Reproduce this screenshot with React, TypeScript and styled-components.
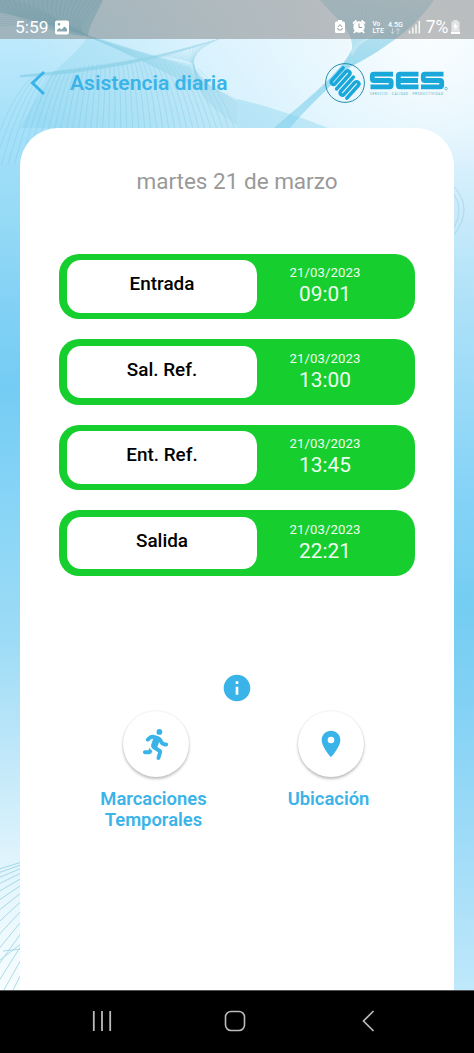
import React from "react";
import styled, { createGlobalStyle } from "styled-components";
import { FaPersonRunning } from "react-icons/fa6";
import { MdInfo, MdLocationOn } from "react-icons/md";

const Global = createGlobalStyle`
  * { box-sizing: border-box; }
  body { margin: 0; font-family: Roboto, sans-serif; }
`;

const blue = "#3ab4e8";

const Screen = styled.main`
  position: relative;
  width: 474px;
  height: 1053px;
  overflow: hidden;
  display: flex;
  flex-direction: column;
  isolation: isolate;
  background: #fff;
`;
const Backdrop = styled.svg`
  position: absolute;
  inset: 0;
  z-index: -1;
`;
const StatusBar = styled.div`
  height: 38.5px;
  flex: none;
  display: flex;
  align-items: center;
  padding: 16px 14px 0 15px;
  background: rgba(128, 128, 128, 0.5);
  color: #fff;
`;
const Clock = styled.span`
  font-size: 17.4px;
  line-height: 22px;
  width: 40px;
`;
const StatusIcons = styled.svg`
  display: block;
  margin-left: auto;
`;
const Battery = styled.span`
  font-size: 17.6px;
  line-height: 22px;
  letter-spacing: -0.3px;
  margin: 0 3px 0 5px;
`;
const Header = styled.header`
  height: 89.5px;
  flex: none;
  display: flex;
  align-items: center;
  padding: 0 26px 0 30px;
`;
const Title = styled.h1`
  margin: 0 auto 0 24px;
  font-size: 21.1px;
  font-weight: 600;
  line-height: 24px;
  color: ${blue};
`;
const Card = styled.section`
  flex: 1;
  margin: 0 20px;
  padding: 40px 39px 0;
  background: #fff;
  border-radius: 38px 38px 0 0;
  display: flex;
  flex-direction: column;
  align-items: center;
`;
const Day = styled.h2`
  margin: 0;
  font-size: 22.5px;
  line-height: 27px;
  font-weight: 400;
  color: #999;
`;
const Rows = styled.div`
  align-self: stretch;
  margin-top: 58.5px;
  display: grid;
  gap: 19.8px;
`;
const Row = styled.div`
  height: 65.8px;
  border-radius: 20px;
  background: #16cf2e;
  display: flex;
  padding: 6.5px 8px;
`;
const RowLabel = styled.div`
  width: 190px;
  height: 52.5px;
  border-radius: 14px;
  background: #fff;
  color: #000;
  text-align: center;
  font-size: 18.9px;
  font-weight: 500;
  line-height: 48px;
`;
const Stamp = styled.div`
  width: 136px;
  padding-top: 5px;
  display: flex;
  flex-direction: column;
  align-items: center;
  color: #effdf0;
`;
const StampDate = styled.span`
  font-size: 13.2px;
  line-height: 16px;
  letter-spacing: 0.1px;
`;
const StampTime = styled.span`
  font-size: 20.8px;
  line-height: 26px;
`;
const InfoIcon = styled(MdInfo)`
  display: block;
  margin-top: 96px;
  width: 32px;
  height: 32px;
  color: ${blue};
`;
const Actions = styled.div`
  align-self: stretch;
  display: flex;
  gap: 35px;
  padding: 7px 0 0 27px;
`;
const Action = styled.div`
  width: 140px;
  display: flex;
  flex-direction: column;
  align-items: center;
  text-align: center;
  font-size: 18.4px;
  line-height: 21px;
  font-weight: 600;
  color: ${blue};
`;
const ActionLabel = styled.span`
  margin-left: -5px;
`;
const RoundButton = styled.button`
  width: 66px;
  height: 66px;
  margin-bottom: 10.5px;
  padding: 0;
  border: 0;
  border-radius: 50%;
  background: #fff;
  color: ${blue};
  display: flex;
  align-items: center;
  justify-content: center;
  box-shadow: 0 2px 3px rgba(0, 0, 0, 0.25), 0 0 2px rgba(0, 0, 0, 0.1);
`;
const NavBar = styled.nav`
  height: 63.5px;
  flex: none;
  background: #000;
  border-top: 1px solid #555;
  display: flex;
  align-items: center;
  justify-content: space-between;
  padding: 0 94.5px 1px 89.5px;
`;

const range = (n: number) => Array.from({ length: n }, (_, i) => i);

const Waves = () => (
  <Backdrop width="474" height="1053" viewBox="0 0 474 1053">
    <defs>
      <linearGradient id="sky" x1="0" y1="0" x2="0" y2="990" gradientUnits="userSpaceOnUse">
        <stop offset="0" stopColor="#c9edfc" />
        <stop offset="0.12" stopColor="#a8e1f9" />
        <stop offset="0.22" stopColor="#96daf6" />
        <stop offset="0.3" stopColor="#84d2f5" />
        <stop offset="0.39" stopColor="#74ccf4" />
        <stop offset="0.5" stopColor="#86d4f6" />
        <stop offset="0.65" stopColor="#9edcf6" />
        <stop offset="0.76" stopColor="#bfe7f9" />
        <stop offset="0.87" stopColor="#e0f4fc" />
        <stop offset="1" stopColor="#f8fdfe" />
      </linearGradient>
      <linearGradient id="edge" x1="0" y1="120" x2="0" y2="990" gradientUnits="userSpaceOnUse">
        <stop offset="0" stopColor="#e8f5fd" stopOpacity="0" />
        <stop offset="0.06" stopColor="#d6effc" />
        <stop offset="0.2" stopColor="#b0e2f8" />
        <stop offset="0.43" stopColor="#85d3f7" />
        <stop offset="0.56" stopColor="#74cdf2" />
        <stop offset="0.68" stopColor="#84d2f5" />
        <stop offset="0.85" stopColor="#a3ddf8" />
        <stop offset="1" stopColor="#bfe8fb" />
      </linearGradient>
      <radialGradient id="glow" cx="430" cy="40" r="400" gradientUnits="userSpaceOnUse">
        <stop offset="0" stopColor="#fff" stopOpacity="0.92" />
        <stop offset="0.3" stopColor="#f4fbff" stopOpacity="0.8" />
        <stop offset="0.6" stopColor="#eaf8ff" stopOpacity="0.62" />
        <stop offset="1" stopColor="#dff4fd" stopOpacity="0" />
      </radialGradient>
      <linearGradient id="ribbon" x1="0" y1="0" x2="0" y2="130" gradientUnits="userSpaceOnUse">
        <stop offset="0" stopColor="#73c2dc" stopOpacity="0.35" />
        <stop offset="0.5" stopColor="#69c7e6" stopOpacity="0.6" />
        <stop offset="1" stopColor="#8bd5ef" stopOpacity="0.6" />
      </linearGradient>
    </defs>
    <rect width="474" height="990" fill="url(#sky)" />
    <rect width="474" height="500" fill="url(#glow)" />
    <rect x="400" y="120" width="74" height="870" fill="url(#edge)" />
    <path d="M0 0H103C96 16 89 25 88 36C63 29 25 17 0 13Z" fill="#47aac4" opacity=".38" />
    <path d="M88 36C80 49 63 64 50 75L20 128H237V101C219 90 198 82 194 65C160 57 124 49 88 36Z" fill="#79cce8" opacity=".25" />
    <path d="M320 0H434C413 31 376 54 350 67C330 86 305 110 290 128H274C307 99 340 74 352 49C354 30 333 16 320 0Z" fill="url(#ribbon)" />
    <path d="M237 99C268 106 306 119 328 128H237Z" fill="#7ccdea" opacity=".35" />
    <g fill="none" stroke="#3aa4c2" strokeWidth=".6" opacity=".38">
      {range(22).map((i) => (
        <path key={i} d={`M${i * 4.8} 0C${i * 4 + 3} 18 ${50 + i} 29 88 36`} />
      ))}
      {range(14).map((i) => (
        <path key={i} d={`M0 ${i * 2}C30 ${i * 1.6} 62 ${22 + i} 88 36`} />
      ))}
    </g>
    <g fill="none" stroke="#4fb2cf" strokeWidth=".6" opacity=".32">
      {range(40).map((i) => (
        <path
          key={i}
          d={`M${34 + i * 4.2} ${76 - 14 * Math.sin((i / 39) * 2.6)}Q${10 + i * 5.6} 94 ${-12 + i * 6.6} 165`}
        />
      ))}
      {range(13).map((i) => (
        <path
          key={i}
          d={`M${219 - i * 5} ${39 + i * 1.4}C${202 - i * 2} ${46 + i} 191 ${55 + i * 0.4} 194 66C196 ${78 + i} ${215 - i} ${90 + i} 237 ${100 + i * 2}`}
        />
      ))}
      {range(8).map((i) => (
        <path key={i} d={`M20 ${77 - i * 0.2}Q130 ${71 - i} ${219 - i * 5} ${39 + i * 1.4}`} />
      ))}
      {range(12).map((i) => (
        <path key={i} d={`M88 36Q${130 + i} ${48 + i} ${190 + i} ${68 + i * 2}`} />
      ))}
    </g>
    <g fill="none" stroke="#fff" strokeWidth=".6" opacity=".3">
      {range(22).map((i) => (
        <path key={i} d={`M${323 + i * 5} 0Q${352 + i * 2} 28 ${352 + i * 0.3} ${56 - i * 0.6}`} />
      ))}
    </g>
    <g fill="none" stroke="#a1cfdf" opacity=".65">
      <path d="M454 187Q474 208 454 235" />
      <path d="M454 194Q464 209 454 228" />
    </g>
    <g fill="none" stroke="#7ac5da" strokeWidth=".9" opacity=".65">
      {range(14).map((i) => (
        <path key={i} d={`M-1 ${869 + i * 3 + i * i * 0.65}L22 ${862 + i * 2 + i * i * 0.5}`} />
      ))}
      <path d="M3 951Q13 950 22 949M0 960L22 943" />
    </g>
  </Backdrop>
);

const Logo = () => (
  <svg width="124" height="42" viewBox="0 0 124 42" fill="none">
    <circle cx="21" cy="21" r="19.4" stroke="#218eab" strokeWidth="1" />
    <path
      transform="rotate(-48 21 21)"
      d="M31 9.500H14A2.300 2.300 0 0 0 14 14.100H30A2.300 2.300 0 0 1 30 18.700H11M31 23.300H12A2.300 2.300 0 0 0 12 27.900H28A2.300 2.300 0 0 1 28 32.500H11"
      stroke="#1aa7da"
      strokeWidth="3.500"
      strokeLinecap="round"
    />
    <g stroke="#1aa7da" strokeWidth="4.800" strokeLinejoin="round">
      <path d="M69 12.200H50Q48.300 12.200 48.300 14V16.700Q48.300 18.500 50 18.500H65.500Q67.200 18.500 67.200 20.300V23Q67.200 24.800 65.500 24.800H46.500" />
      <path d="M94.500 12.200H76Q74.300 12.200 74.300 14V23Q74.300 24.800 76 24.800H94.500M75 18.500H94" />
      <path d="M119.500 12.200H101Q99.300 12.200 99.300 14V16.700Q99.300 18.500 101 18.500H116Q117.700 18.500 117.700 20.300V23Q117.700 24.800 116 24.800H97" />
    </g>
    <text x="46" y="33" fontSize="3.200" fontFamily="Roboto, sans-serif" fill="#55b3c4" textLength="73">SERVICIO · CALIDAD · PRODUCTIVIDAD</text>
    <circle cx="122" cy="26.500" r="1.300" stroke="#4fabc5" strokeWidth=".7" />
  </svg>
);

const marks = [
  { label: "Entrada", time: "09:01" },
  { label: "Sal. Ref.", time: "13:00" },
  { label: "Ent. Ref.", time: "13:45" },
  { label: "Salida", time: "22:21" },
];

export default function App() {
  return (
    <Screen>
      <Global />
      <Waves />
      <StatusBar>
        <Clock>5:59</Clock>
        <svg width="14" height="15" viewBox="0 0 14 15">
          <path fill="#fff" fillRule="evenodd" d="M2 .5H12Q14 .5 14 2.500V12.500Q14 14.500 12 14.500H2Q0 14.500 0 12.500V2.500Q0 .5 2 .5ZM2 11.500H12V9L9.500 6.500L6.500 9.500L4.500 8L2 10ZM4 3A1.300 1.300 0 1 0 4 5.600A1.300 1.300 0 0 0 4 3Z" />
        </svg>
        <StatusIcons width="86" height="18" viewBox="0 0 86 18" fill="none" stroke="#fff">
          <path d="M3 2H7V3.500H8.500Q10 3.500 10 5V13.500Q10 15 8.500 15H1.500Q0 15 0 13.500V5Q0 3.500 1.500 3.500H3Z" fill="#fff" stroke="none" />
          <path d="M3 9L5 6.500L7 9M7.500 10L6.500 12H3.500L2.500 10" stroke="#969da0" />
          <circle cx="24" cy="9" r="5.700" fill="#fff" stroke="none" />
          <path d="M18 5.500L21.500 2.500M26.500 2.500L30 5.500M20.500 13L18.800 15M27.500 13L29.200 15" strokeWidth="1.700" />
          <path d="M24 5.500V9.500H27" stroke="#969da0" />
          <g fill="#fff" stroke="none" fontFamily="Roboto, sans-serif" fontWeight="500">
            <text x="37.500" y="8" fontSize="6.500">Vo</text>
            <text x="37.500" y="15" fontSize="7.200" textLength="11.500">LTE</text>
            <text x="53" y="8.500" fontSize="7.800" textLength="15" lengthAdjust="spacingAndGlyphs">4.5G</text>
          </g>
          <path d="M57.500 10V15.500L55.500 13.500M57.500 15.500L59.500 13.500M63 16V10.500L61 12.500M63 10.500L65 12.500" opacity=".45" />
          <path d="M74.500 12.500V15.500M77.800 9.500V15.500M81 6.500V15.500M84.300 3V15.500" strokeWidth="1.500" opacity=".9" />
        </StatusIcons>
        <Battery>7%</Battery>
        <svg width="9" height="14" viewBox="0 0 9 14">
          <path d="M2.500 0H6.500V1.500H8.500V11H.5V1.500H2.500Z" fill="#fff" opacity=".6" />
          <path d="M0 11.500H9V14H0ZM5 3L2 7H4L3.500 10L7 6H5Z" fill="#fff" />
        </svg>
      </StatusBar>
      <Header>
        <svg width="16" height="26" viewBox="0 0 16 26">
          <path d="M14 2L2.500 13L14 24" fill="none" stroke={blue} strokeWidth="3" />
        </svg>
        <Title>Asistencia diaria</Title>
        <Logo />
      </Header>
      <Card>
        <Day>martes 21 de marzo</Day>
        <Rows>
          {marks.map((mark) => (
            <Row key={mark.label}>
              <RowLabel>{mark.label}</RowLabel>
              <Stamp>
                <StampDate>21/03/2023</StampDate>
                <StampTime>{mark.time}</StampTime>
              </Stamp>
            </Row>
          ))}
        </Rows>
        <InfoIcon />
        <Actions>
          <Action>
            <RoundButton aria-label="Marcaciones Temporales"><FaPersonRunning size={31} /></RoundButton>
            <ActionLabel>Marcaciones<br />Temporales</ActionLabel>
          </Action>
          <Action>
            <RoundButton aria-label="Ubicación"><MdLocationOn size={32} /></RoundButton>
            <ActionLabel>Ubicación</ActionLabel>
          </Action>
        </Actions>
      </Card>
      <NavBar>
        <svg width="24" height="24" viewBox="0 0 24 24" stroke="#bbb" strokeWidth="1.800">
          <path d="M3.800 2V22M12 2V22M20.200 2V22" />
        </svg>
        <svg width="24" height="24" viewBox="0 0 24 24" fill="none" stroke="#bbb" strokeWidth="1.600">
          <rect x="2.500" y="2.500" width="19" height="19" rx="5.500" />
        </svg>
        <svg width="24" height="24" viewBox="0 0 24 24" fill="none" stroke="#bbb" strokeWidth="1.700">
          <path d="M17.500 2L7.500 12L17.500 22" />
        </svg>
      </NavBar>
    </Screen>
  );
}
